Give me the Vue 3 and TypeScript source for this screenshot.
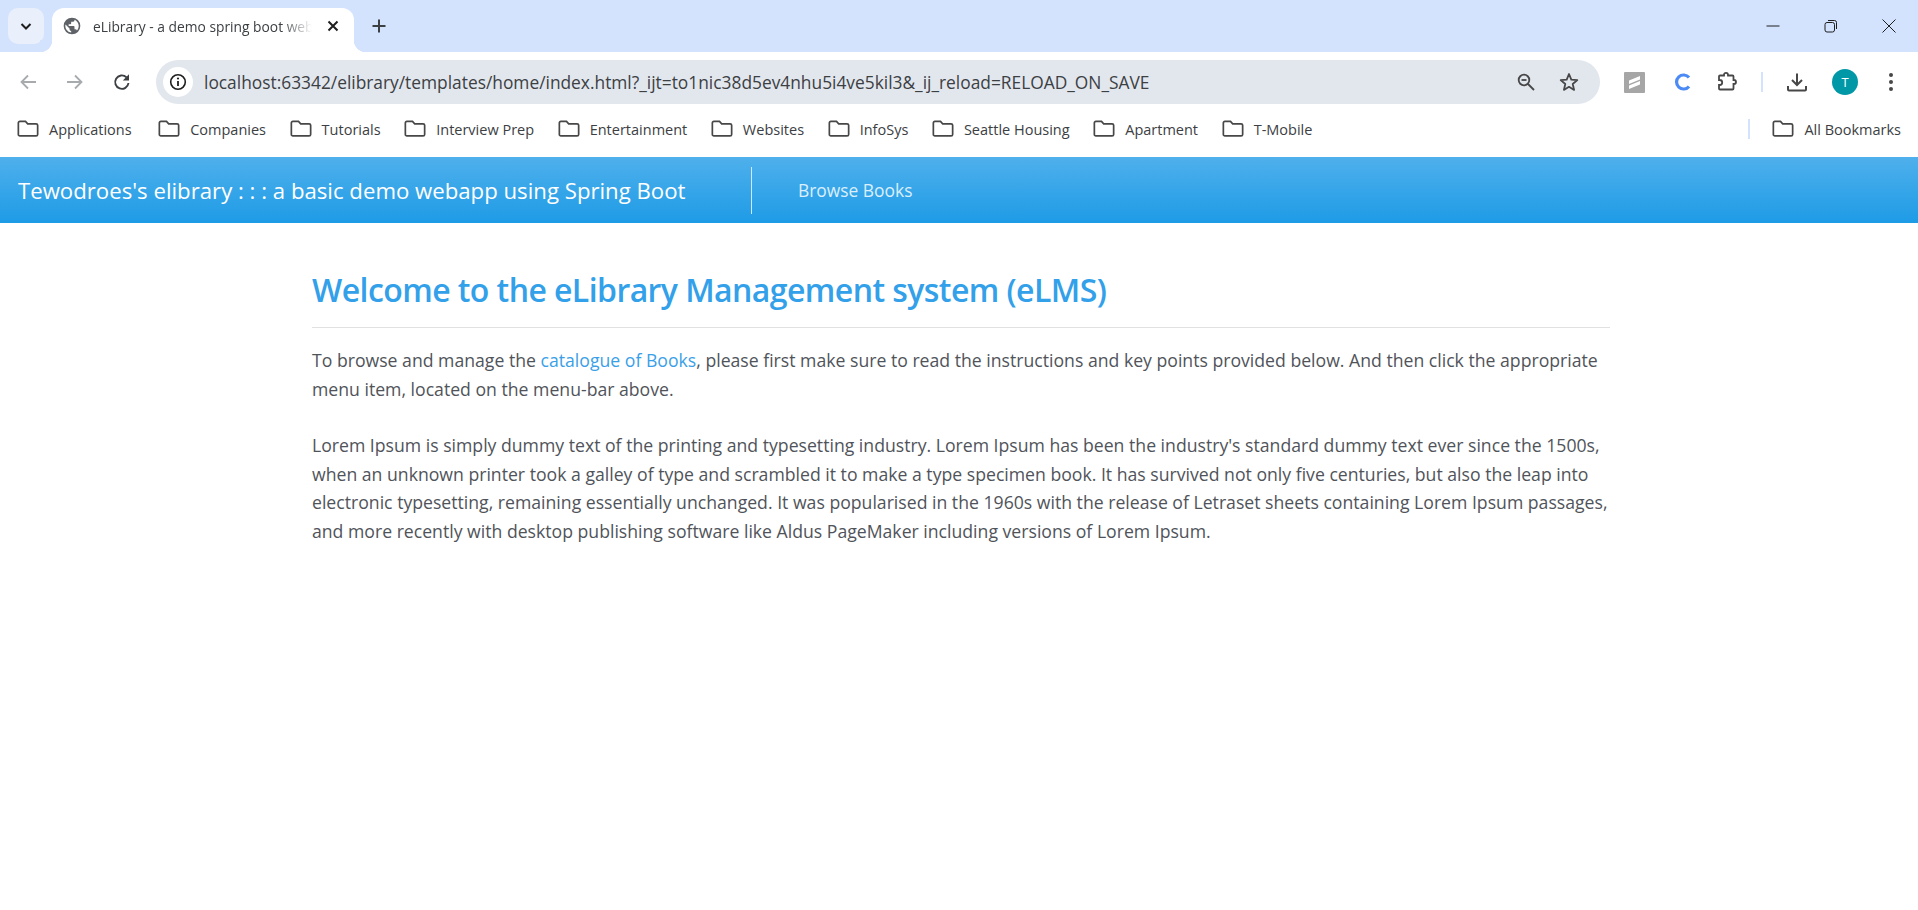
<script setup lang="ts">
const bookmarks: string[] = [
  'Applications',
  'Companies',
  'Tutorials',
  'Interview Prep',
  'Entertainment',
  'Websites',
  'InfoSys',
  'Seattle Housing',
  'Apartment',
  'T-Mobile'
]
const folderPath =
  'M2.350 6C2.350 5.100 3 4.400 3.900 4.400h5.600l2.200 2.400h8.400c.9 0 1.550.7 1.550 1.500v9.100c0 .9-.65 1.500-1.550 1.500H3.900c-.9 0-1.550-.6-1.550-1.500z'
</script>

<template>
  <div class="page">
    <div class="tabstrip">
      <div class="tabsearch">
        <svg width="16" height="16" viewBox="0 0 16 16"><path d="M3.500 6l4.500 4.500L12.500 6" fill="none" stroke="#1f1f1f" stroke-width="2" /></svg>
      </div>
      <div class="tab">
        <svg class="favicon" width="20" height="20" viewBox="0 0 24 24"><path fill="#5f6368" d="M12 2a10 10 0 1 0 0 20 10 10 0 0 0 0-20zm-1 17.900A8 8 0 0 1 4.200 10.200L9 15v1a2 2 0 0 0 2 2zm6.900-2.500A2 2 0 0 0 16 16h-1v-3a1 1 0 0 0-1-1H8v-2h2a1 1 0 0 0 1-1V7h2a2 2 0 0 0 2-2v-.4a8 8 0 0 1 2.900 12.800z" /></svg>
        <span class="tabtitle">eLibrary - a demo spring boot webapp</span>
        <svg class="tabclose" width="14" height="14" viewBox="0 0 14 14"><path d="M2.500 2.500l9 9M11.500 2.500l-9 9" stroke="#1f1f1f" stroke-width="2" /></svg>
      </div>
      <svg class="newtab" width="16" height="16" viewBox="0 0 16 16"><path d="M8 1.500v13M1.500 8h13" stroke="#3c4043" stroke-width="2" /></svg>
      <div class="winbtns">
        <svg width="16" height="16" viewBox="0 0 16 16"><path d="M1.500 8h13" stroke="#1f1f1f" stroke-width="1" /></svg>
        <svg width="16" height="16" viewBox="0 0 16 16"><rect x="2" y="4.500" width="9.500" height="9.500" rx="2" fill="none" stroke="#1f1f1f" /><path d="M5 2.500h6.500a2 2 0 0 1 2 2V11" fill="none" stroke="#1f1f1f" /></svg>
        <svg width="16" height="16" viewBox="0 0 16 16"><path d="M1.500 1.500l13 13M14.500 1.500l-13 13" stroke="#1f1f1f" stroke-width="1" /></svg>
      </div>
    </div>

    <div class="toolbar">
      <svg class="navicon" width="20" height="20" viewBox="0 0 20 20"><path d="M18 10H4M10 3.500L3.500 10l6.500 6.500" fill="none" stroke="#a8abae" stroke-width="1.800" /></svg>
      <svg class="navicon" width="20" height="20" viewBox="0 0 20 20"><path d="M2 10h14M10 3.500l6.500 6.500-6.500 6.500" fill="none" stroke="#a8abae" stroke-width="1.800" /></svg>
      <svg class="navicon reload" width="20" height="20" viewBox="0 0 20 20"><path d="M16.500 11A6.700 6.700 0 1 1 14.400 5.200" fill="none" stroke="#3c4043" stroke-width="1.900" /><path d="M17 2.300v6.200h-6.200z" fill="#3c4043" /></svg>
      <div class="omnibox">
        <div class="infobadge">
          <svg width="18" height="18" viewBox="0 0 18 18"><circle cx="9" cy="9" r="7.300" fill="none" stroke="#1f1f1f" stroke-width="1.600" /><path d="M9 8v5" stroke="#1f1f1f" stroke-width="1.800" /><circle cx="9" cy="5.500" r="1.100" fill="#1f1f1f" /></svg>
        </div>
        <span class="url">localhost:63342/elibrary/templates/home/index.html?_ijt=to1nic38d5ev4nhu5i4ve5kil3&amp;_ij_reload=RELOAD_ON_SAVE</span>
        <svg class="zoomicon" width="20" height="20" viewBox="0 0 20 20"><circle cx="8" cy="8" r="5.300" fill="none" stroke="#474747" stroke-width="1.800" /><path d="M12 12l6 6" stroke="#474747" stroke-width="1.800" /><path d="M5.500 8h5" stroke="#474747" stroke-width="1.800" /></svg>
        <svg class="staricon" width="22" height="22" viewBox="0 0 22 22"><path d="M11 3l2.300 5.600 6 .5-4.600 3.900 1.400 5.900L11 15.800 5.900 18.900l1.400-5.900L2.700 9.100l6-.5z" fill="none" stroke="#474747" stroke-width="1.800" stroke-linejoin="round" /></svg>
      </div>
      <div class="extensions">
        <div class="ext-grey">
          <svg width="21" height="21" viewBox="0 0 21 21"><rect width="21" height="21" rx="1" fill="#a6a6a6" /><path d="M5 8.500l11-4.500v3.500l-11 4.500zM5 13.500l11-4.500v3.500l-11 4.500z" fill="#fff" /></svg>
        </div>
        <svg class="ext-c" width="18" height="20" viewBox="0 0 18 20"><path d="M16 5.600A7 7 0 1 0 16 14.400" fill="none" stroke="#4c8bf5" stroke-width="3.200" /></svg>
        <svg class="ext-puzzle" width="22" height="22" viewBox="0 0 22 22"><path d="M8 4.500V3.800a2 2 0 0 1 4 0v.7h4.500a1 1 0 0 1 1 1V9h.5a2 2 0 0 1 0 4h-.5v4.500a1 1 0 0 1-1 1H4a1 1 0 0 1-1-1V14h.7a2.500 2.500 0 0 0 0-5H3V5.500a1 1 0 0 1 1-1z" fill="none" stroke="#474747" stroke-width="1.800" /></svg>
        <div class="vsep"></div>
        <svg class="ext-down" width="22" height="22" viewBox="0 0 22 22"><path d="M11 2.500v11M6 9l5 5 5-5" fill="none" stroke="#474747" stroke-width="2" /><path d="M2 15v3.500a1 1 0 0 0 1 1h16a1 1 0 0 0 1-1V15" fill="none" stroke="#474747" stroke-width="2" /></svg>
        <div class="avatar">T</div>
        <svg class="ext-dots" width="6" height="20" viewBox="0 0 6 20"><circle cx="3" cy="3" r="2" fill="#474747" /><circle cx="3" cy="10" r="2" fill="#474747" /><circle cx="3" cy="17" r="2" fill="#474747" /></svg>
      </div>
    </div>

    <div class="bookmarks">
      <div v-for="item in bookmarks" :key="item" class="bookmark">
        <svg width="24" height="24" viewBox="0 0 24 24"><path :d="folderPath" fill="none" stroke="#474747" stroke-width="1.700" /></svg>
        <span>{{ item }}</span>
      </div>
      <div class="bmsep"></div>
      <div class="bookmark allmarks">
        <svg width="24" height="24" viewBox="0 0 24 24"><path :d="folderPath" fill="none" stroke="#474747" stroke-width="1.700" /></svg>
        <span>All Bookmarks</span>
      </div>
    </div>

    <header class="navbar">
      <div class="brand">Tewodroes's elibrary : : : a basic demo webapp using Spring Boot</div>
      <a class="navlink">Browse Books</a>
    </header>

    <main class="content">
      <h1 class="heading">Welcome to the eLibrary Management system (eLMS)</h1>
      <p class="para">
        To browse and manage the <a class="link">catalogue of Books</a>, please first make sure to read the instructions and key points provided below. And then click the appropriate menu item, located on the menu-bar above.
      </p>
      <p class="para">
        Lorem Ipsum is simply dummy text of the printing and typesetting industry. Lorem Ipsum has been the industry's standard dummy text ever since the 1500s, when an unknown printer took a galley of type and scrambled it to make a type specimen book. It has survived not only five centuries, but also the leap into electronic typesetting, remaining essentially unchanged. It was popularised in the 1960s with the release of Letraset sheets containing Lorem Ipsum passages, and more recently with desktop publishing software like Aldus PageMaker including versions of Lorem Ipsum.
      </p>
    </main>
  </div>
</template>

<style scoped>
.page {
  width: 1918px;
  height: 910px;
  overflow: hidden;
  background: #fff;
  font-family: "Open Sans", "Noto Sans", sans-serif;
}
.tabstrip {
  height: 52px;
  background: #d3e3fd;
  display: flex;
  align-items: flex-end;
}
.tabsearch {
  width: 36px;
  height: 36px;
  margin: 0 8px 8px 8px;
  border-radius: 10px;
  background: #e9f0fc;
  display: flex;
  align-items: center;
  justify-content: center;
}
.tab {
  width: 302px;
  height: 44px;
  background: #fff;
  border-radius: 12px 12px 0 0;
  display: flex;
  align-items: center;
  padding: 0 14px 8px 10px;
  box-sizing: border-box;
  position: relative;
}
.tab::before,
.tab::after {
  content: "";
  position: absolute;
  bottom: 0;
  width: 12px;
  height: 12px;
}
.tab::before {
  left: -12px;
  background: radial-gradient(circle at 0 0, #d3e3fd 12px, #fff 12.500px);
}
.tab::after {
  right: -12px;
  background: radial-gradient(circle at 100% 0, #d3e3fd 12px, #fff 12.500px);
}
.favicon {
  flex: none;
}
.tabtitle {
  flex: none;
  width: 219px;
  margin-left: 11px;
  overflow: hidden;
  white-space: nowrap;
  font-size: 13.800px;
  color: #3c4043;
  -webkit-mask-image: linear-gradient(to right, #000 86%, transparent 100%);
  mask-image: linear-gradient(to right, #000 86%, transparent 100%);
}
.tabclose {
  margin-left: auto;
  flex: none;
}
.newtab {
  margin: 0 0 18px 17px;
}
.winbtns {
  margin-left: auto;
  display: flex;
  gap: 42px;
  padding-right: 21px;
  align-self: center;
}
.toolbar {
  height: 44px;
  padding: 8px 0 0 18px;
  display: flex;
  align-items: center;
  background: #fff;
  border-radius: 12px 12px 0 0;
}
.navicon {
  margin-right: 27px;
  flex: none;
}
.reload {
  margin-right: 24px;
}
.omnibox {
  width: 1444px;
  height: 44px;
  background: #e2e7ee;
  border-radius: 22px;
  display: flex;
  align-items: center;
  padding: 0 20px 0 7px;
  box-sizing: border-box;
  flex: none;
}
.infobadge {
  width: 30px;
  height: 30px;
  border-radius: 50%;
  background: #fff;
  display: flex;
  align-items: center;
  justify-content: center;
  flex: none;
}
.url {
  margin-left: 11px;
  font-size: 17.350px;
  color: #3c4043;
  white-space: nowrap;
  flex: 1;
  overflow: hidden;
}
.zoomicon {
  margin-right: 22px;
  flex: none;
}
.staricon {
  flex: none;
}
.extensions {
  display: flex;
  align-items: center;
  margin-left: 24px;
  flex: none;
}
.ext-grey {
  display: flex;
}
.ext-c {
  margin-left: 28px;
}
.ext-puzzle {
  margin-left: 25px;
}
.vsep {
  width: 2px;
  height: 20px;
  background: #d3e3fd;
  margin-left: 23px;
}
.ext-down {
  margin-left: 23px;
}
.avatar {
  width: 26px;
  height: 26px;
  margin-left: 24px;
  border-radius: 50%;
  background: #0097a7;
  color: #fff;
  font-size: 13px;
  display: flex;
  align-items: center;
  justify-content: center;
}
.ext-dots {
  margin-left: 30px;
}
.bookmarks {
  height: 53px;
  padding: 0 0 3px 16px;
  box-sizing: border-box;
  display: flex;
  align-items: center;
  gap: 22.600px;
  background: #fff;
}
.bookmark {
  display: flex;
  align-items: center;
  gap: 9px;
  font-size: 14.500px;
  color: #3c4043;
  white-space: nowrap;
}
.bookmark:first-child {
  margin-right: 3px;
}
.bmsep {
  width: 2px;
  height: 20px;
  background: #d3e3fd;
  margin-left: auto;
  margin-right: -1px;
}
.allmarks {
  padding-right: 17px;
}
.navbar {
  height: 66px;
  background: linear-gradient(to bottom, #4fb0ec, #1e9be6);
  display: flex;
  align-items: center;
  padding-left: 18px;
  box-sizing: border-box;
}
.brand {
  width: 734px;
  height: 47px;
  line-height: 47px;
  border-right: 1px solid #cfe8fa;
  box-sizing: border-box;
  color: #fff;
  font-size: 22.200px;
  white-space: nowrap;
}
.navlink {
  margin-left: 46px;
  color: #dceffc;
  font-size: 17.400px;
}
.content {
  width: 1298px;
  margin-left: 312px;
}
.heading {
  margin: 0;
  padding: 44px 0 14px;
  border-bottom: 1px solid #e1e1e1;
  color: #33a0ea;
  font-size: 32px;
  line-height: 46px;
  font-weight: 600;
  letter-spacing: -0.570px;
}
.para {
  margin: 18px 0 28px;
  color: #50545a;
  font-size: 17.650px;
  line-height: 28.500px;
}
.link {
  color: #3a9fe8;
}
</style>

<style>
html,
body {
  margin: 0;
  background: #fff;
}
</style>
